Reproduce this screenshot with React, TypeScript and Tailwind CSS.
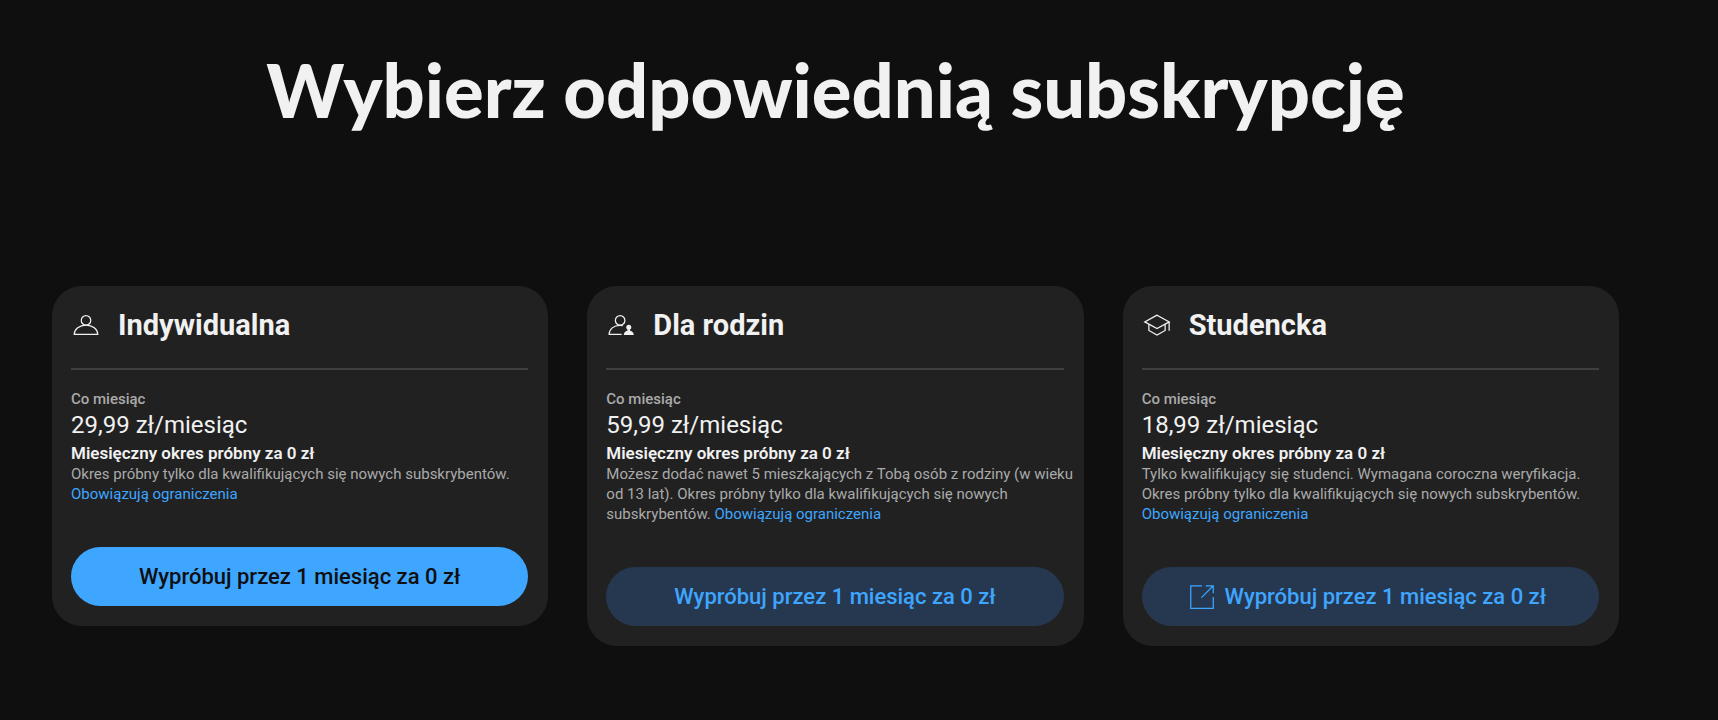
import React from 'react';

type IconName = 'person' | 'family' | 'student';

interface Plan {
  name: string;
  icon: IconName;
  price: string;
  details: string;
  primary?: boolean;
  external?: boolean;
}

const plans: Plan[] = [
  {
    name: 'Indywidualna',
    icon: 'person',
    price: '29,99 zł/miesiąc',
    details: 'Okres próbny tylko dla kwalifikujących się nowych subskrybentów.',
    primary: true,
  },
  {
    name: 'Dla rodzin',
    icon: 'family',
    price: '59,99 zł/miesiąc',
    details:
      'Możesz dodać nawet 5 mieszkających z Tobą osób z rodziny (w wieku od 13 lat). Okres próbny tylko dla kwalifikujących się nowych subskrybentów.',
  },
  {
    name: 'Studencka',
    icon: 'student',
    price: '18,99 zł/miesiąc',
    details:
      'Tylko kwalifikujący się studenci. Wymagana coroczna weryfikacja. Okres próbny tylko dla kwalifikujących się nowych subskrybentów.',
    external: true,
  },
];

function PlanIcon({ name }: { name: IconName }) {
  return (
    <svg
      viewBox="0 0 24 24"
      className="h-[30px] w-[30px] shrink-0"
      fill="none"
      stroke="currentColor"
      strokeWidth="1"
      aria-hidden="true"
    >
      {name === 'person' && (
        <>
          <circle cx="12" cy="8.3" r="3.8" />
          <path d="M2.6 19.5c0-4.1 4.2-7.4 9.4-7.4s9.4 3.3 9.4 7.4z" />
        </>
      )}
      {name === 'family' && (
        <>
          <circle cx="11.3" cy="8.3" r="3.8" />
          <path d="M13.5 12.6c-.8-.3-1.6-.4-2.5-.4-4.700 0-8.500 3.200-8.500 7.300h10" />
          <circle cx="18.2" cy="13.700" r="2" fill="currentColor" stroke="none" />
          <path
            d="M17.400 15h1.600l.3 1.600c1.800.3 2.900 1.500 2.900 3.400h-8c0-1.900 1.100-3.100 2.900-3.400z"
            fill="currentColor"
            stroke="none"
          />
        </>
      )}
      {name === 'student' && (
        <>
          <path d="M12 4.100 2.200 9.500 12 14.900l9.800-5.400z" />
          <path d="M5.500 11.400v5l6.500 3.600 6.500-3.600v-5" />
          <path d="M21.700 9.500v7" />
        </>
      )}
    </svg>
  );
}

function ExternalIcon() {
  return (
    <svg
      viewBox="0 0 24 24"
      className="-ml-2 h-[30px] w-[30px] shrink-0"
      fill="none"
      stroke="currentColor"
      strokeWidth="1"
      aria-hidden="true"
    >
      <path d="M12 3H3v18h18V12" />
      <path d="M15 3h6v6M21 3l-9.500 9.500" />
    </svg>
  );
}

function PlanCard({ plan }: { plan: Plan }) {
  return (
    <section className="rounded-[30px] bg-[#212121] pb-5 pl-[19px] pr-5 pt-[21px]">
      <div className="flex items-center gap-[17px]">
        <PlanIcon name={plan.icon} />
        <h2 className="text-[29px] font-bold leading-9">{plan.name}</h2>
      </div>
      <hr className="mt-[25px] border-t-2 border-[#3f3f3f]" />

      <p className="mt-[19px] text-[15px] font-medium leading-5 text-[#aaa]">Co miesiąc</p>
      <p className="text-2xl leading-[33px]">{plan.price}</p>
      <p className="text-[17px] font-semibold leading-[22px]">Miesięczny okres próbny za 0 zł</p>
      <p className="-mr-3 text-[15px] leading-5 text-[#aaa]">
        {plan.details}{' '}
        <a href="#restrictions" className="text-[#3ea6ff]">
          Obowiązują ograniczenia
        </a>
      </p>

      <button
        type="button"
        className={
          plan.primary
            ? 'mt-[43px] flex h-[59px] w-full items-center justify-center rounded-full bg-[#3ea6ff] text-[22px] font-medium text-[#0f0f0f]'
            : 'mt-[43px] flex h-[59px] w-full items-center justify-center gap-2 rounded-full bg-[#263850] text-[22px] font-medium text-[#3ea6ff]'
        }
      >
        {plan.external && <ExternalIcon />}
        Wypróbuj przez 1 miesiąc za 0 zł
      </button>
    </section>
  );
}

export default function App() {
  return (
    <div className="min-h-screen bg-[#0f0f0f] pl-[52px] pr-[99px] pt-[46px] font-[Roboto,sans-serif] text-[#f1f1f1]">
      <h1 className="text-center font-[Lato,sans-serif] text-[74px] font-black leading-[88px]">
        Wybierz odpowiednią subskrypcję
      </h1>
      <main className="mt-[152px] grid grid-cols-3 items-start gap-[39px]">
        {plans.map((plan) => (
          <PlanCard key={plan.name} plan={plan} />
        ))}
      </main>
    </div>
  );
}
